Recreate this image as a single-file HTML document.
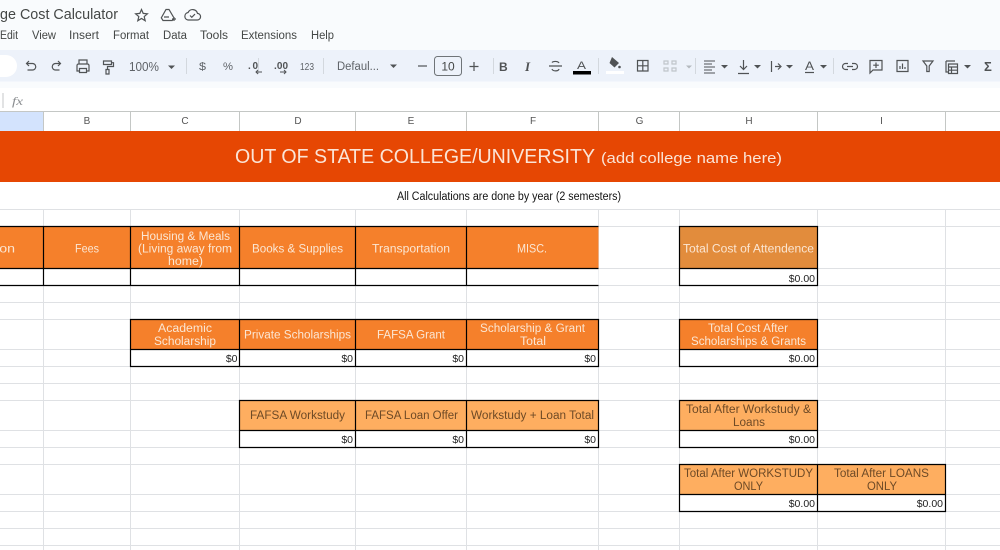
<!DOCTYPE html>
<html><head><meta charset="utf-8"><style>
html,body{margin:0;padding:0;width:1000px;height:550px;overflow:hidden;background:#fff}
svg{display:block;font-family:"Liberation Sans",sans-serif}
.i{fill:none;stroke:#505355;stroke-width:1.2}
.f{fill:#505355;stroke:none}
.m{font-size:11.5px;fill:#444746}
.t{font-size:11px;fill:#5f6368}
.h{font-size:10px;fill:#555;text-anchor:middle}
.w{font-size:11.5px;fill:#fbe6d3}
.d{font-size:11.5px;fill:#6e4a26}
.n{font-size:10.5px;fill:#222;text-anchor:end}
.g{fill:none;stroke:#dfe1e4;stroke-width:1}
.k{fill:none;stroke:#000;stroke-width:1.2}
</style></head><body>
<svg width="1000" height="550" viewBox="0 0 1000 550" xmlns="http://www.w3.org/2000/svg">
<rect width="1000" height="88" fill="#f9fbfd"/>
<text x="0" y="19" font-size="15" fill="#444746" textLength="118" lengthAdjust="spacingAndGlyphs">ge Cost Calculator</text>
<path class="i" d="M141.500 9.500l1.700 3.900 4.200.4-3.200 2.800 1 4.100-3.700-2.200-3.700 2.200 1-4.100-3.200-2.800 4.200-.4z"/>
<path class="i" d="M166 9.500h3l5 8.500-1.800 2.500h-9.200l-1.700-2.700zM164 17h5M174 17v4M172 19h4"/>
<path class="i" d="M188 20h9a3.300 3.300 0 0 0 .5-6.600 5 5 0 0 0-9.400-.9 3.800 3.800 0 0 0-.1 7.500zM190 15.500l1.800 1.800 3.200-3.200"/>
<text class="m" x="0" y="39" textLength="18" lengthAdjust="spacingAndGlyphs">Edit</text>
<text class="m" x="32" y="39" textLength="24" lengthAdjust="spacingAndGlyphs">View</text>
<text class="m" x="69" y="39" textLength="30" lengthAdjust="spacingAndGlyphs">Insert</text>
<text class="m" x="113" y="39" textLength="36" lengthAdjust="spacingAndGlyphs">Format</text>
<text class="m" x="163" y="39" textLength="24" lengthAdjust="spacingAndGlyphs">Data</text>
<text class="m" x="200" y="39" textLength="28" lengthAdjust="spacingAndGlyphs">Tools</text>
<text class="m" x="241" y="39" textLength="56" lengthAdjust="spacingAndGlyphs">Extensions</text>
<text class="m" x="311" y="39" textLength="23" lengthAdjust="spacingAndGlyphs">Help</text>

<rect y="50" width="1000" height="31.500" fill="#edf2fa"/>
<rect x="-20" y="55" width="37" height="22" rx="11" fill="#fff"/>
<path class="i" d="M29 61l-2.500 2.500 2.500 2.500M26.500 63.500h6a3.200 3.200 0 0 1 0 6.500h-5"/>
<path class="i" d="M58 61l2.500 2.500-2.500 2.500M60.500 63.500h-5a3.200 3.200 0 0 0 0 6.500h4"/>
<path class="i" d="M79 64v-4h8v4M79 71h-2v-5.500a1.500 1.500 0 0 1 1.500-1.500h9a1.500 1.500 0 0 1 1.500 1.500V71h-2M79.500 68.500h7v4h-7z"/>
<path class="i" d="M103.500 61h8v3.500h-8zM111.500 62.700h2v3.800h-6v3M106 69.500h3v4.500h-3z"/>
<text class="t" x="129" y="71" style="font-size:12.500px" textLength="30" lengthAdjust="spacingAndGlyphs">100%</text>
<path class="f" d="M168 65.500h7l-3.500 3.500z"/>
<path d="M186.500 58v16M493.500 58v16M258.500 58v16M323.500 58v16M598.500 58v16M695.500 58v16M833.500 58v16" stroke="#d3d8de" stroke-width="1"/>
<text class="t" x="199" y="70" textLength="7" lengthAdjust="spacingAndGlyphs">$</text>
<text class="t" x="223" y="70" textLength="10" lengthAdjust="spacingAndGlyphs">%</text>
<text x="248" y="69" font-size="10" font-weight="700" fill="#505355" textLength="10">.0</text>
<path class="i" style="stroke-width:1" d="M262 72h-6M258 70l-2 2 2 2"/>
<text x="274" y="69" font-size="10" font-weight="700" fill="#505355" textLength="14">.00</text>
<path class="i" style="stroke-width:1" d="M280 72h6M284 70l2 2-2 2"/>
<text class="t" x="300" y="70" style="font-size:10.500px" textLength="14" lengthAdjust="spacingAndGlyphs">123</text>
<text class="t" x="337" y="70" style="font-size:11.500px" textLength="42" lengthAdjust="spacingAndGlyphs">Defaul...</text>
<path class="f" d="M390 64.500h7l-3.500 3.500z"/>
<path class="i" d="M418 66h9"/>
<rect x="434.500" y="56.500" width="27" height="19" rx="3" fill="none" stroke="#6f7478" stroke-width="1"/>
<text class="t" x="448" y="70.500" text-anchor="middle" style="font-size:12px;fill:#444746">10</text>
<path class="i" d="M469.500 66.500h9M474 62v9"/>
<text x="499" y="71" font-size="12" font-weight="700" fill="#505355">B</text>
<text x="525" y="71" font-size="13" font-style="italic" font-weight="700" fill="#505355" font-family="Liberation Serif">I</text>
<path class="i" d="M549 66h13M552 62.500c1-1.500 6-1.500 7 .5M552 69c.8 2.500 6.500 2.500 7 0"/>
<text x="577" y="69" font-size="11" fill="#505355" textLength="9" lengthAdjust="spacingAndGlyphs">A</text>
<rect x="573" y="71" width="18" height="3.500" fill="#000"/>
<path class="f" d="M612 57l7 6-4.500 4.500-5-4.500z"/><circle class="f" cx="619.500" cy="67" r="1.300"/>
<rect x="606" y="71" width="18" height="3" fill="#fff"/>
<path class="i" d="M637.500 60.500h10.500v10.500h-10.500zM642.800 60.500v10.500M637.500 65.800h10.500"/>
<path d="M664 61h4v3h-4zM664 68h4v3h-4zM672 61h4v3h-4zM672 68h4v3h-4z" fill="none" stroke="#c0c5ca" stroke-width="1.200"/>
<path d="M686 65.500h6l-3 3z" fill="#b4b9be"/>
<path class="i" d="M704 61h11M704 64h8M704 67h11M704 70h8M704 73h11" style="stroke-width:1"/>
<path class="f" d="M721 65h7l-3.500 3.500z"/>
<path class="i" d="M743.500 60v9M740 66l3.500 3.500 3.500-3.500M738 73.500h11"/>
<path class="f" d="M754 65h7l-3.500 3.500z"/>
<path class="i" d="M771.500 61v11M775 66.500h5M778 63.500l3 3-3 3"/>
<path class="f" d="M786 65h7l-3.500 3.500z"/>
<text x="805" y="70" font-size="12" fill="#505355" textLength="9" lengthAdjust="spacingAndGlyphs">A</text>
<path class="i" d="M805 72.500h9"/>
<path class="f" d="M820 65h7l-3.500 3.500z"/>
<path class="i" d="M848 63.500h-2.500a3 3 0 0 0 0 6h2.500M852 63.500h2.500a3 3 0 0 1 0 6h-2.500M847 66.500h6"/>
<path class="i" d="M870 60.500h12v9.500h-9l-3 3zM876 62.500v5.500M873.200 65.200h5.600"/>
<path class="i" d="M897 60.500h11v11h-11zM900 69v-3M902.500 69v-5.500M905 69v-2"/>
<path class="i" d="M923 61h10l-3.800 5v5.500h-2.400v-5.500z"/>
<path class="i" d="M946 61h9M946 61v11h2M948.500 64h9v9.500h-9zM948.500 67h9M948.500 70.200h9M951.500 67v6.500"/>
<path class="f" d="M964 65h7l-3.500 3.500z"/>
<text x="984" y="71" font-size="13" font-weight="700" fill="#505355">Σ</text>

<rect y="88" width="1000" height="23" fill="#fff"/>
<path d="M3 93v15" stroke="#c4c7c9"/>
<text x="12" y="105" font-size="12" font-style="italic" fill="#8a8d90" font-family="Liberation Serif" textLength="11" lengthAdjust="spacingAndGlyphs">fx</text>

<rect y="111" width="1000" height="20" fill="#fff"/>
<rect y="111" width="43.500" height="20" fill="#d3e3fd"/>
<path d="M0 111.500h1000" stroke="#c4c7c5"/>
<path d="M43.500 111v20M130.500 111v20M239.500 111v20M355.500 111v20M466.500 111v20M598.500 111v20M679.500 111v20M817.500 111v20M945.500 111v20" stroke="#c4c7c5"/>
<text class="h" x="87" y="124">B</text><text class="h" x="185" y="124">C</text><text class="h" x="298" y="124">D</text><text class="h" x="411" y="124">E</text><text class="h" x="533" y="124">F</text><text class="h" x="639.500" y="124">G</text><text class="h" x="749" y="124">H</text><text class="h" x="881.500" y="124">I</text>

<path class="g" d="M0 209.500H1000M0 226.500H1000M0 268.500H1000M0 285.500H1000M0 302.500H1000M0 319.500H1000M0 349.500H1000M0 366.500H1000M0 383.500H1000M0 400.500H1000M0 430.500H1000M0 447.500H1000M0 464.500H1000M0 494.500H1000M0 511.500H1000M0 528.500H1000M0 545.500H1000"/>
<path class="g" d="M43.500 209V550M130.500 209V550M239.500 209V550M355.500 209V550M466.500 209V550M598.500 209V550M679.500 209V550M817.500 209V550M945.500 209V550"/>

<rect y="131" width="1000" height="51" fill="#e64703"/>
<text x="235" y="163" font-size="20" fill="#fbe4d6" textLength="360" lengthAdjust="spacingAndGlyphs">OUT OF STATE COLLEGE/UNIVERSITY</text>
<text x="601" y="163" font-size="15" fill="#fbe4d6" textLength="181" lengthAdjust="spacingAndGlyphs">(add college name here)</text>
<text x="397" y="200" font-size="11.500" fill="#111" textLength="224" lengthAdjust="spacingAndGlyphs">All Calculations are done by year (2 semesters)</text>

<!-- row 1 -->
<rect x="0" y="226.500" width="598.500" height="41.500" fill="#f5802b"/>
<rect x="679.500" y="226.500" width="138" height="41.500" fill="#e28c3c"/>
<rect x="0" y="268.500" width="598.500" height="17" fill="#fff"/>
<rect x="679.500" y="268.500" width="138" height="17" fill="#fff"/>
<path class="k" d="M0 226.500H598.500M0 268.500H598.500M0 285.500H598.500M43.500 226v60M130.500 226v60M239.500 226v60M355.500 226v60M466.500 226v60"/>
<path class="k" d="M679.500 226.500H817.500V285.500H679.500ZM679.500 268.500H817.500"/>
<text class="w" x="-27" y="252.500" textLength="42" lengthAdjust="spacingAndGlyphs">Tuition</text>
<text class="w" x="75" y="252.500" textLength="24" lengthAdjust="spacingAndGlyphs">Fees</text>
<text class="w" x="141" y="240" textLength="89" lengthAdjust="spacingAndGlyphs">Housing &amp; Meals</text>
<text class="w" x="138" y="252.500" textLength="94" lengthAdjust="spacingAndGlyphs">(Living away from</text>
<text class="w" x="168" y="265" textLength="35" lengthAdjust="spacingAndGlyphs">home)</text>
<text class="w" x="252" y="252.500" textLength="91" lengthAdjust="spacingAndGlyphs">Books &amp; Supplies</text>
<text class="w" x="372" y="252.500" textLength="78" lengthAdjust="spacingAndGlyphs">Transportation</text>
<text class="w" x="517" y="252.500" textLength="30" lengthAdjust="spacingAndGlyphs">MISC.</text>
<text class="w" x="683" y="252.500" textLength="131" lengthAdjust="spacingAndGlyphs">Total Cost of Attendence</text>
<text class="n" x="815" y="282">$0.00</text>

<!-- row 2 -->
<rect x="130.500" y="319.500" width="468" height="30" fill="#f5802b"/>
<rect x="679.500" y="319.500" width="138" height="30" fill="#f5802b"/>
<rect x="130.500" y="349.500" width="468" height="17" fill="#fff"/>
<rect x="679.500" y="349.500" width="138" height="17" fill="#fff"/>
<path class="k" d="M130.500 319.500H598.500V366.500H130.500ZM130.500 349.500H598.500M239.500 319v48M355.500 319v48M466.500 319v48"/>
<path class="k" d="M679.500 319.500H817.500V366.500H679.500ZM679.500 349.500H817.500"/>
<text class="w" x="158" y="332" textLength="54" lengthAdjust="spacingAndGlyphs">Academic</text>
<text class="w" x="154" y="345" textLength="62" lengthAdjust="spacingAndGlyphs">Scholarship</text>
<text class="w" x="244" y="338.500" textLength="107" lengthAdjust="spacingAndGlyphs">Private Scholarships</text>
<text class="w" x="377" y="338.500" textLength="68" lengthAdjust="spacingAndGlyphs">FAFSA Grant</text>
<text class="w" x="480" y="332" textLength="105" lengthAdjust="spacingAndGlyphs">Scholarship &amp; Grant</text>
<text class="w" x="520" y="345" textLength="26" lengthAdjust="spacingAndGlyphs">Total</text>
<text class="w" x="708" y="332" textLength="80" lengthAdjust="spacingAndGlyphs">Total Cost After</text>
<text class="w" x="691" y="345" textLength="115" lengthAdjust="spacingAndGlyphs">Scholarships &amp; Grants</text>
<text class="n" x="237.500" y="362">$0</text><text class="n" x="353" y="362">$0</text><text class="n" x="464" y="362">$0</text><text class="n" x="596" y="362">$0</text><text class="n" x="815" y="362">$0.00</text>

<!-- row 3 -->
<rect x="239.500" y="400.500" width="359" height="30" fill="#feae60"/>
<rect x="679.500" y="400.500" width="138" height="30" fill="#feae60"/>
<rect x="239.500" y="430.500" width="359" height="17" fill="#fff"/>
<rect x="679.500" y="430.500" width="138" height="17" fill="#fff"/>
<path class="k" d="M239.500 400.500H598.500V447.500H239.500ZM239.500 430.500H598.500M355.500 400v48M466.500 400v48"/>
<path class="k" d="M679.500 400.500H817.500V447.500H679.500ZM679.500 430.500H817.500"/>
<text class="d" x="250" y="419" textLength="95" lengthAdjust="spacingAndGlyphs">FAFSA Workstudy</text>
<text class="d" x="365" y="419" textLength="93" lengthAdjust="spacingAndGlyphs">FAFSA Loan Offer</text>
<text class="d" x="471" y="419" textLength="123" lengthAdjust="spacingAndGlyphs">Workstudy + Loan Total</text>
<text class="d" x="686" y="413" textLength="125" lengthAdjust="spacingAndGlyphs">Total After Workstudy &amp;</text>
<text class="d" x="733" y="426" textLength="32" lengthAdjust="spacingAndGlyphs">Loans</text>
<text class="n" x="353" y="443">$0</text><text class="n" x="464" y="443">$0</text><text class="n" x="596" y="443">$0</text><text class="n" x="815" y="443">$0.00</text>

<!-- row 4 -->
<rect x="679.500" y="464.500" width="266" height="30" fill="#feae60"/>
<rect x="679.500" y="494.500" width="266" height="17" fill="#fff"/>
<path class="k" d="M679.500 464.500H945.500V511.500H679.500ZM679.500 494.500H945.500M817.500 464v48"/>
<text class="d" x="684" y="477" textLength="129" lengthAdjust="spacingAndGlyphs">Total After WORKSTUDY</text>
<text class="d" x="734" y="490" textLength="29" lengthAdjust="spacingAndGlyphs">ONLY</text>
<text class="d" x="834" y="477" textLength="95" lengthAdjust="spacingAndGlyphs">Total After LOANS</text>
<text class="d" x="867" y="490" textLength="30" lengthAdjust="spacingAndGlyphs">ONLY</text>
<text class="n" x="815" y="507">$0.00</text><text class="n" x="943" y="507">$0.00</text>
</svg>
</body></html>
